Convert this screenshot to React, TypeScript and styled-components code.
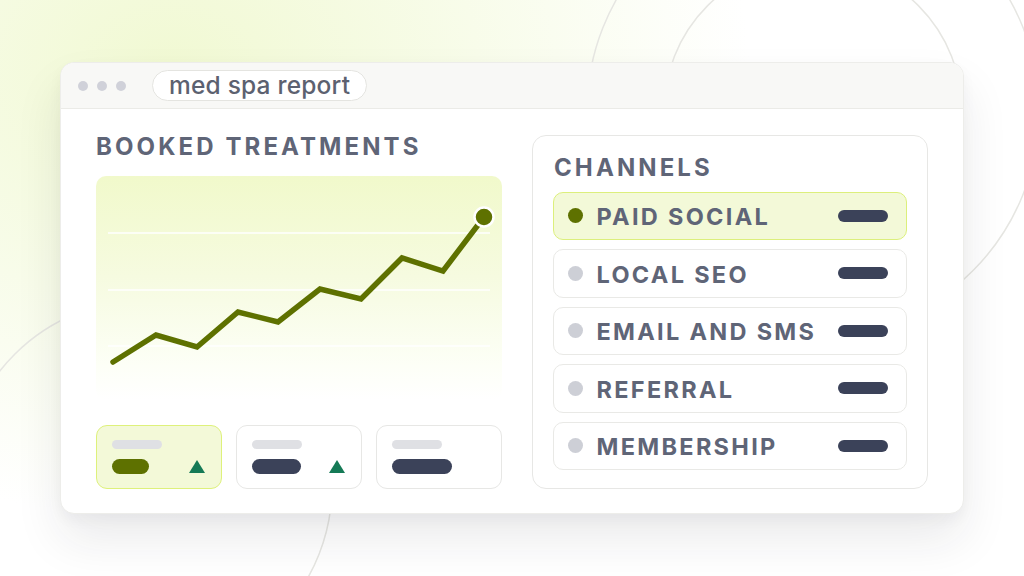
import React from "react";
import styled, { createGlobalStyle } from "styled-components";

const GlobalStyle = createGlobalStyle`
  html, body { margin: 0; padding: 0; }
  body {
    width: 1024px;
    height: 576px;
    overflow: hidden;
    font-family: Inter, "Noto Sans", "Liberation Sans", sans-serif;
    background: #ffffff;
  }
  * { box-sizing: border-box; }
`;

const Page = styled.div`
  position: relative;
  width: 1024px;
  height: 576px;
  padding: 62px 60px;
  overflow: hidden;
  background:
    radial-gradient(ellipse 580px 450px at 170px 70px, #f1f9d3 0%, rgba(243, 250, 219, 0.72) 42%, rgba(255, 255, 255, 0) 100%),
    #ffffff;
`;

const Decor = styled.svg`
  position: absolute;
  inset: 0;
  width: 1024px;
  height: 576px;
  z-index: 0;
`;

const Window = styled.div`
  position: relative;
  z-index: 1;
  width: 904px;
  height: 452px;
  border-radius: 14px;
  background: #ffffff;
  border: 1px solid #ededea;
  box-shadow: 0 26px 48px rgba(30, 32, 40, 0.09), 0 6px 14px rgba(30, 32, 40, 0.04);
  display: flex;
  flex-direction: column;
  overflow: hidden;
`;

const TitleBar = styled.div`
  height: 46px;
  flex: none;
  background: #f8f8f6;
  border-bottom: 1.5px solid #ebebe7;
  display: flex;
  align-items: center;
  padding: 0 0 0 17px;
  gap: 26px;
`;

const Dots = styled.div`
  display: flex;
  gap: 9px;
`;

const Dot = styled.span`
  width: 10px;
  height: 10px;
  border-radius: 50%;
  background: #d0d1d9;
`;

const AddressPill = styled.div`
  height: 31px;
  padding: 0 16px 2px 16px;
  border: 1.5px solid #e4e4e0;
  border-radius: 16px;
  background: #ffffff;
  display: flex;
  align-items: center;
  font-size: 24.5px;
  font-weight: 500;
  color: #5c6170;
  letter-spacing: 0.2px;
`;

const Body = styled.div`
  flex: 1;
  display: flex;
  gap: 30px;
  padding: 26px 35px 24px 35px;
`;

const LeftColumn = styled.div`
  width: 406px;
  display: flex;
  flex-direction: column;
`;

const Heading = styled.h2`
  margin: 0;
  font-size: 24px;
  line-height: 24px;
  font-weight: 700;
  letter-spacing: 3.1px;
  color: #5f6577;
  white-space: nowrap;
`;

const Chart = styled.div`
  margin-top: 17px;
  height: 224px;
  border-radius: 10px;
  background: linear-gradient(180deg, #f1f9cb 0%, #f6fbe0 45%, #fdfff7 85%, #ffffff 100%);
  overflow: hidden;
  svg { display: block; }
`;

const Cards = styled.div`
  margin-top: 25px;
  display: grid;
  grid-template-columns: repeat(3, 1fr);
  gap: 14px;
`;

const Card = styled.div<{ $active?: boolean }>`
  height: 64px;
  border-radius: 11px;
  border: 1.5px solid ${(p) => (p.$active ? "#def17b" : "#e7e7e5")};
  background: ${(p) => (p.$active ? "#f3f9d8" : "#ffffff")};
  padding: 13.5px 16px 0 14.5px;
  display: flex;
  flex-direction: column;
  gap: 10px;
`;

const LabelBar = styled.div`
  width: 50px;
  height: 9px;
  border-radius: 5px;
  background: #dfe0e4;
`;

const ValueRow = styled.div`
  display: flex;
  align-items: center;
  justify-content: space-between;
`;

const ValueBar = styled.div<{ $w: number; $active?: boolean }>`
  width: ${(p) => p.$w}px;
  height: 15px;
  border-radius: 8px;
  background: ${(p) => (p.$active ? "#5e7100" : "#3b4259")};
`;

const Triangle = styled.div`
  width: 0;
  height: 0;
  border-left: 8px solid transparent;
  border-right: 8px solid transparent;
  border-bottom: 13px solid #157a56;
`;

const Panel = styled.div`
  width: 396px;
  height: 354px;
  border: 1.5px solid #e7e7e5;
  border-radius: 14px;
  padding: 19.5px 20px 0 20px;
  display: flex;
  flex-direction: column;
`;

const PanelTitle = styled(Heading)`
  margin-left: 1px;
`;

const Rows = styled.div`
  margin-top: 12px;
  display: flex;
  flex-direction: column;
  gap: 9px;
`;

const Row = styled.div<{ $active?: boolean }>`
  height: 48.5px;
  border-radius: 10px;
  border: 1.5px solid ${(p) => (p.$active ? "#dcef7c" : "#e9e9e6")};
  background: ${(p) => (p.$active ? "#f3f9d8" : "#ffffff")};
  display: flex;
  align-items: center;
  padding: 0 18px 0 13.5px;
  gap: 14px;
`;

const RowDot = styled.span<{ $active?: boolean }>`
  width: 15px;
  height: 15px;
  flex: none;
  border-radius: 50%;
  background: ${(p) => (p.$active ? "#5e7100" : "#cdcfd6")};
`;

const RowLabel = styled.span`
  margin-top: 3px;
  font-size: 23.5px;
  line-height: 24px;
  font-weight: 700;
  letter-spacing: 2.3px;
  color: #5f6577;
  white-space: nowrap;
`;

const RowBar = styled.span`
  margin-left: auto;
  width: 50px;
  height: 12px;
  border-radius: 6px;
  background: #3b4259;
`;

const points: [number, number][] = [
  [17, 186],
  [60, 159],
  [101, 171],
  [142, 136],
  [182, 146],
  [224, 113],
  [265, 123],
  [306, 82],
  [347, 95],
  [388, 41],
];

const channels = [
  { name: "PAID SOCIAL", active: true },
  { name: "LOCAL SEO" },
  { name: "EMAIL AND SMS" },
  { name: "REFERRAL" },
  { name: "MEMBERSHIP" },
];

const cards = [
  { w: 37, up: true, active: true },
  { w: 49, up: true },
  { w: 60, up: false },
];

export default function App() {
  return (
    <>
      <GlobalStyle />
      <Page>
        <Decor viewBox="0 0 1024 576" aria-hidden="true">
          <g fill="none" stroke="#e6e6e2" strokeWidth="1.5">
            <circle cx="813" cy="111" r="149" />
            <circle cx="813" cy="111" r="226" />
            <circle cx="146" cy="486" r="186" />
          </g>
        </Decor>
        <Window>
          <TitleBar>
            <Dots>
              <Dot />
              <Dot />
              <Dot />
            </Dots>
            <AddressPill>med spa report</AddressPill>
          </TitleBar>
          <Body>
            <LeftColumn>
              <Heading>BOOKED TREATMENTS</Heading>
              <Chart>
                <svg width="406" height="224" viewBox="0 0 406 224">
                  <g stroke="#ffffff" strokeWidth="1.5">
                    <line x1="12" y1="57" x2="394" y2="57" />
                    <line x1="12" y1="114" x2="394" y2="114" />
                    <line x1="12" y1="170" x2="394" y2="170" />
                  </g>
                  <polyline
                    points={points.map((p) => p.join(",")).join(" ")}
                    fill="none"
                    stroke="#5e7100"
                    strokeWidth="5.5"
                    strokeLinecap="round"
                    strokeLinejoin="miter"
                  />
                  <circle cx="388" cy="41" r="9.5" fill="#5e7100" stroke="#ffffff" strokeWidth="2.5" />
                </svg>
              </Chart>
              <Cards>
                {cards.map((c, i) => (
                  <Card key={i} $active={c.active}>
                    <LabelBar />
                    <ValueRow>
                      <ValueBar $w={c.w} $active={c.active} />
                      {c.up && <Triangle />}
                    </ValueRow>
                  </Card>
                ))}
              </Cards>
            </LeftColumn>
            <Panel>
              <PanelTitle>CHANNELS</PanelTitle>
              <Rows>
                {channels.map((ch) => (
                  <Row key={ch.name} $active={ch.active}>
                    <RowDot $active={ch.active} />
                    <RowLabel>{ch.name}</RowLabel>
                    <RowBar />
                  </Row>
                ))}
              </Rows>
            </Panel>
          </Body>
        </Window>
      </Page>
    </>
  );
}
